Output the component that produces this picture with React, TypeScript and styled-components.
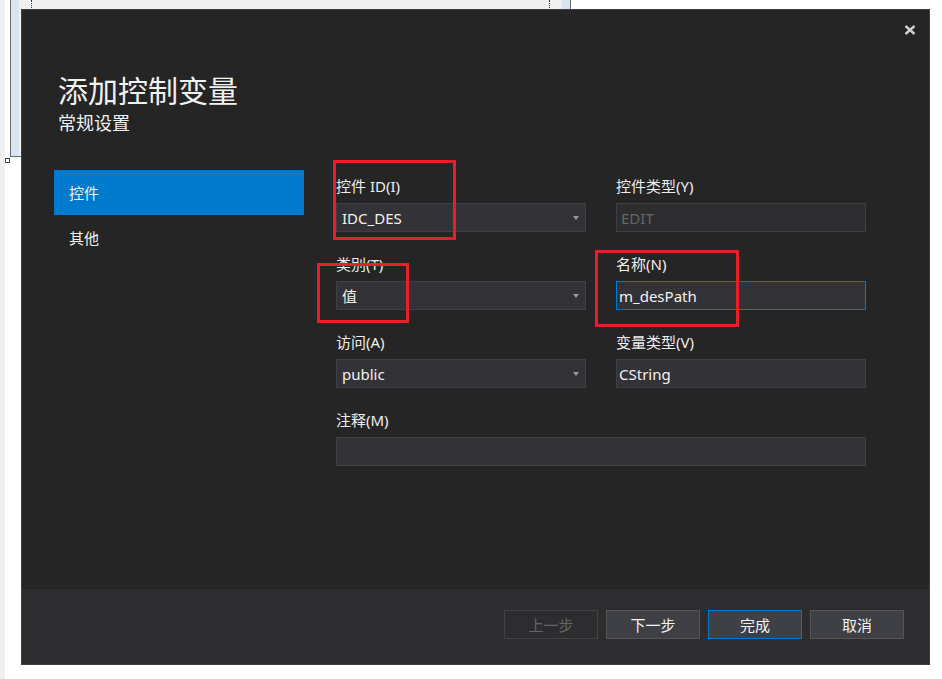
import React from 'react';
import styled, { createGlobalStyle } from 'styled-components';

const GlobalStyle = createGlobalStyle`
    html, body {
        margin: 0;
        padding: 0;
        background: #ffffff;
    }
    body {
        font-family: "Noto Sans", "Noto Sans CJK SC", sans-serif;
    }
`;

const Desktop = styled.div`
    position: relative;
    width: 942px;
    height: 679px;
    overflow: hidden;
    background: #ffffff;
`;

const LeftGutter = styled.div`
    position: absolute;
    left: 0;
    top: 0;
    width: 5px;
    height: 100%;
    background: #efefef;
`;

const DesignerFrame = styled.div`
    position: absolute;
    left: 10px;
    top: 0;
    width: 561px;
    height: 157px;
    box-sizing: border-box;
    border: 1px solid #6b6b6b;
    border-top: none;
    background: #d7e4f2;
    padding: 0 8px;
`;

const DesignSurface = styled.div`
    height: 100%;
    background: #efefef;
    padding: 0 12px;
    box-sizing: border-box;
`;

const Guides = styled.div`
    height: 100%;
    border-left: 1px dotted #1a1aff;
    border-right: 1px dotted #1a1aff;
`;

const Handle = styled.div`
    position: absolute;
    left: 5px;
    top: 158px;
    width: 5px;
    height: 5px;
    box-sizing: border-box;
    border: 1px solid #444;
    background: #fff;
`;

const Dialog = styled.div`
    position: absolute;
    left: 21px;
    top: 9px;
    width: 909px;
    height: 656px;
    box-sizing: border-box;
    border: 1px solid #3f3f46;
    background: #252526;
    display: flex;
    flex-direction: column;
    color: #f1f1f1;
`;

const TopBar = styled.div`
    height: 40px;
    box-sizing: border-box;
    display: flex;
    justify-content: flex-end;
    padding: 8px 7px 0 0;
`;

const CloseButton = styled.div`
    width: 24px;
    height: 24px;
    display: flex;
    align-items: center;
    justify-content: center;
`;

const Header = styled.div`
    padding-left: 36px;
    margin-top: 20px;
`;

const Title = styled.div`
    font-family: "Noto Sans CJK SC", sans-serif;
    font-size: 30px;
    line-height: 38px;
    color: #f1f1f1;
`;

const Subtitle = styled.div`
    font-family: "Noto Sans CJK SC", sans-serif;
    font-size: 18px;
    line-height: 24px;
    margin-top: 2px;
    color: #f1f1f1;
`;

const Body = styled.div`
    flex: 1;
    display: flex;
    padding: 36px 0 0 32px;
`;

const Sidebar = styled.div`
    width: 250px;
    display: flex;
    flex-direction: column;
`;

const NavItem = styled.div<{ active?: boolean }>`
    height: 45px;
    display: flex;
    align-items: center;
    padding-left: 15px;
    font-size: 15px;
    background: ${p => (p.active ? '#007acc' : 'transparent')};
    color: #f1f1f1;
`;

const Form = styled.div`
    margin-left: 32px;
    padding-top: 6px;
    width: 530px;
    display: grid;
    grid-template-columns: 250px 250px;
    column-gap: 30px;
    row-gap: 22px;
    align-content: start;
`;

const Field = styled.div<{ wide?: boolean }>`
    display: flex;
    flex-direction: column;
    gap: 7px;
    grid-column: ${p => (p.wide ? '1 / span 2' : 'auto')};
`;

const Label = styled.div`
    font-size: 15px;
    line-height: 20px;
    color: #eeeeee;
`;

const Box = styled.div<{ focused?: boolean; disabled?: boolean; pad?: number }>`
    height: 29px;
    box-sizing: border-box;
    display: flex;
    align-items: center;
    justify-content: space-between;
    padding: 0 6px 0 ${p => p.pad ?? 5}px;
    font-size: 15px;
    background: ${p => (p.disabled ? '#2d2d30' : '#333337')};
    border: 1px solid ${p => (p.focused ? '#007acc' : '#3f3f46')};
    color: ${p => (p.disabled ? '#656565' : '#f1f1f1')};
`;

const Arrow = styled.span`
    width: 0;
    height: 0;
    border-left: 3.5px solid transparent;
    border-right: 3.5px solid transparent;
    border-top: 4px solid #999999;
    margin-top: 1px;
`;

const Footer = styled.div`
    height: 75px;
    box-sizing: border-box;
    background: #2d2d30;
    display: flex;
    justify-content: flex-end;
    align-items: flex-start;
    gap: 8px;
    padding: 21px 25px 0 0;
`;

const Button = styled.div<{ variant?: 'disabled' | 'default' | 'normal' }>`
    width: 94px;
    height: 29px;
    box-sizing: border-box;
    display: flex;
    align-items: center;
    justify-content: center;
    font-size: 15px;
    background: ${p => (p.variant === 'disabled' ? '#2d2d30' : '#3f3f46')};
    border: 1px solid ${p =>
        p.variant === 'default' ? '#007acc' : p.variant === 'disabled' ? '#434346' : '#555555'};
    color: ${p => (p.variant === 'disabled' ? '#656565' : '#f1f1f1')};
`;

const Annotation = styled.div<{ x: number; y: number; w: number; h: number }>`
    position: absolute;
    left: ${p => p.x}px;
    top: ${p => p.y}px;
    width: ${p => p.w}px;
    height: ${p => p.h}px;
    box-sizing: border-box;
    border: 3px solid #e5202a;
`;

const Dropdown = ({ value }: { value: string }) => (
    <Box>
        <span>{value}</span>
        <Arrow />
    </Box>
);

const App = () => {
    return (
        <Desktop>
            <GlobalStyle />
            <LeftGutter />
            <DesignerFrame>
                <DesignSurface>
                    <Guides />
                </DesignSurface>
            </DesignerFrame>
            <Handle />
            <Dialog>
                <TopBar>
                    <CloseButton>
                        <svg width="12" height="10" viewBox="0 0 12 10">
                            <path d="M1.5 1 L10.5 9 M10.5 1 L1.5 9" stroke="#cfcfcf" strokeWidth="2.4" />
                        </svg>
                    </CloseButton>
                </TopBar>
                <Header>
                    <Title>添加控制变量</Title>
                    <Subtitle>常规设置</Subtitle>
                </Header>
                <Body>
                    <Sidebar>
                        <NavItem active>控件</NavItem>
                        <NavItem>其他</NavItem>
                    </Sidebar>
                    <Form>
                        <Field>
                            <Label>控件 ID(I)</Label>
                            <Dropdown value="IDC_DES" />
                        </Field>
                        <Field>
                            <Label>控件类型(Y)</Label>
                            <Box disabled pad={4}>EDIT</Box>
                        </Field>
                        <Field>
                            <Label>类别(T)</Label>
                            <Dropdown value="值" />
                        </Field>
                        <Field>
                            <Label>名称(N)</Label>
                            <Box focused pad={2}>m_desPath</Box>
                        </Field>
                        <Field>
                            <Label>访问(A)</Label>
                            <Dropdown value="public" />
                        </Field>
                        <Field>
                            <Label>变量类型(V)</Label>
                            <Box pad={2}>CString</Box>
                        </Field>
                        <Field wide>
                            <Label>注释(M)</Label>
                            <Box />
                        </Field>
                    </Form>
                </Body>
                <Footer>
                    <Button variant="disabled">上一步</Button>
                    <Button>下一步</Button>
                    <Button variant="default">完成</Button>
                    <Button>取消</Button>
                </Footer>
            </Dialog>
            <Annotation x={333} y={160} w={123} h={80} />
            <Annotation x={317} y={263} w={92} h={60} />
            <Annotation x={595} y={250} w={144} h={77} />
        </Desktop>
    );
};

export default App;
